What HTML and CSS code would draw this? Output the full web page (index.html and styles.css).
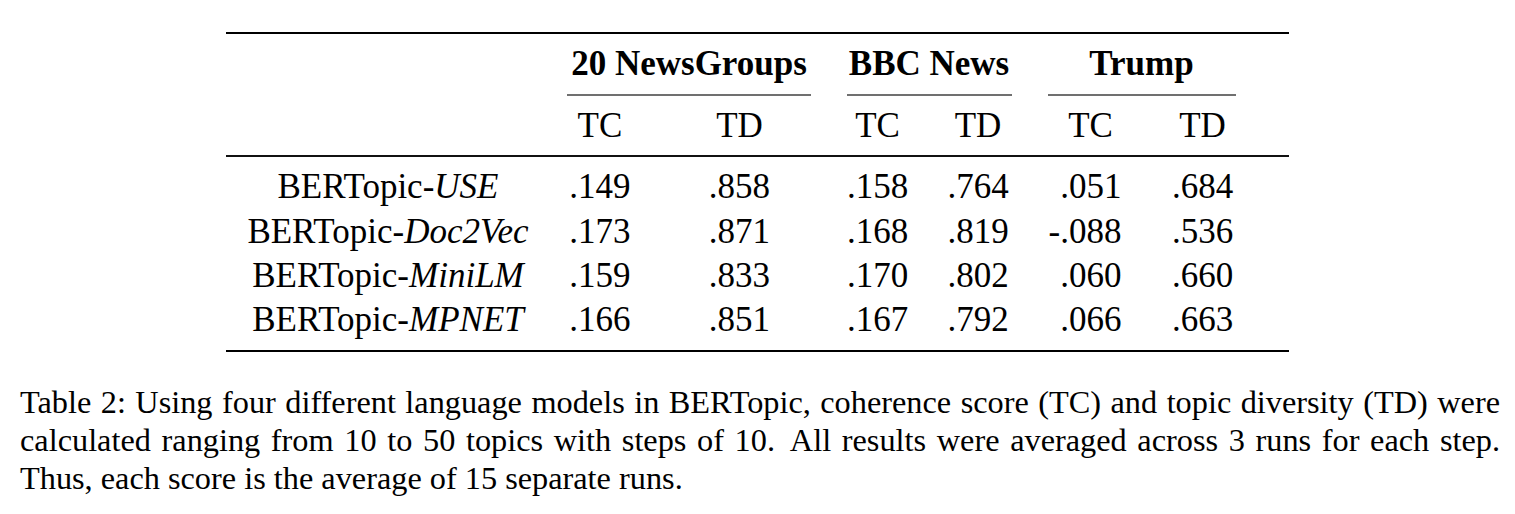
FILE: index.html
```html
<!DOCTYPE html>
<html>
<head>
<meta charset="utf-8">
<link rel="stylesheet" href="styles.css">
</head>
<body>
<div class="page">
  <table class="results">
    <colgroup>
      <col class="c-name"><col class="c-ng-tc"><col class="c-ng-td"><col class="c-bbc-tc"><col class="c-bbc-td"><col class="c-tr-tc"><col class="c-tr-td"><col class="c-pad">
    </colgroup>
    <thead>
      <tr class="groups">
        <th></th>
        <th colspan="2"><div class="grp">20 NewsGroups</div><div class="cmid"></div></th>
        <th colspan="2"><div class="grp">BBC News</div><div class="cmid"></div></th>
        <th colspan="2"><div class="grp">Trump</div><div class="cmid"></div></th>
        <th></th>
      </tr>
      <tr class="metrics">
        <th></th>
        <th>TC</th><th>TD</th>
        <th>TC</th><th>TD</th>
        <th>TC</th><th>TD</th>
        <th></th>
      </tr>
    </thead>
    <tbody>
      <tr class="first">
        <td>BERTopic-<i>USE</i></td>
        <td>.149</td><td>.858</td>
        <td>.158</td><td>.764</td>
        <td class="r">.051</td><td>.684</td>
        <td></td>
      </tr>
      <tr>
        <td>BERTopic-<i>Doc2Vec</i></td>
        <td>.173</td><td>.871</td>
        <td>.168</td><td>.819</td>
        <td class="r">-.088</td><td>.536</td>
        <td></td>
      </tr>
      <tr>
        <td>BERTopic-<i>MiniLM</i></td>
        <td>.159</td><td>.833</td>
        <td>.170</td><td>.802</td>
        <td class="r">.060</td><td>.660</td>
        <td></td>
      </tr>
      <tr class="last">
        <td>BERTopic-<i>MPNET</i></td>
        <td>.166</td><td>.851</td>
        <td>.167</td><td>.792</td>
        <td class="r">.066</td><td>.663</td>
        <td></td>
      </tr>
    </tbody>
  </table>
  <p class="caption">
    <span class="line just">Table 2: Using four different language models in BERTopic, coherence score (TC) and topic diversity (TD) were</span>
    <span class="line just">calculated ranging from 10 to 50 topics with steps of 10.<span class="ss"> </span>All results were averaged across 3 runs for each step.</span>
    <span class="line">Thus, each score is the average of 15 separate runs.</span>
  </p>
</div>
</body>
</html>
```
FILE: styles.css
```css
html, body {
  margin: 0;
  padding: 0;
  background: #fff;
}

body {
  font-family: "Liberation Serif", "Times New Roman", serif;
  color: #000;
}

.page {
  padding-top: 32px;
  width: 1515px;
}

.results {
  border-collapse: collapse;
  table-layout: fixed;
  width: 1062px;
  margin: 0 auto;
  font-size: 35px;
  border-top: 2px solid #000;
  border-bottom: 2px solid #000;
}

.c-name { width: 323px; }
.c-ng-tc { width: 101px; }
.c-ng-td { width: 178px; }
.c-bbc-tc { width: 98px; }
.c-bbc-td { width: 103px; }
.c-tr-tc { width: 122px; }
.c-tr-td { width: 102px; }
.c-pad { width: 35px; }

.results th,
.results td {
  padding: 0;
  text-align: center;
  white-space: nowrap;
  line-height: 44.3px;
}

.results th {
  font-weight: normal;
}

.groups th {
  padding-top: 8px;
  vertical-align: top;
}

.grp {
  font-weight: bold;
  line-height: 44px;
}

.cmid {
  margin: 8px 18px 0;
  border-top: 2px solid #707070;
}

.metrics th {
  padding-top: 8px;
  padding-bottom: 7px;
  border-bottom: 2px solid #111;
}

.first td {
  padding-top: 8px;
}

.last td {
  padding-bottom: 8px;
}

.results td.r {
  text-align: right;
  padding-right: 30px;
}

.results i {
  font-style: italic;
}

.caption {
  margin: 31px 0 0 20px;
  width: 1480px;
  font-size: 32.3px;
  line-height: 38px;
}

.caption .line {
  display: block;
  white-space: nowrap;
}

.caption .line.just {
  white-space: normal;
  text-align: justify;
  text-align-last: justify;
}

.caption .ss {
  margin-left: 6px;
}
```
